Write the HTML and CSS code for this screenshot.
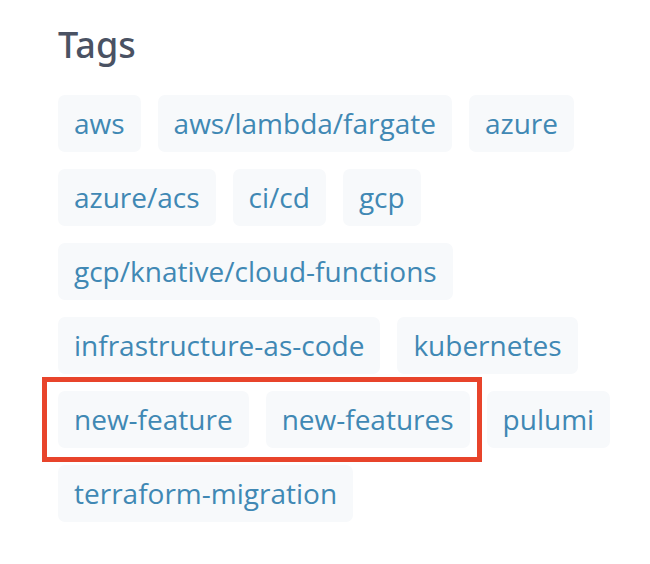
FILE: index.html
```html
<!DOCTYPE html>
<html>
<head>
<meta charset="utf-8">
<link rel="stylesheet" href="styles.css">
</head>
<body>
<section class="tags-panel">
  <h2 class="title">Tags</h2>
  <div class="tag-list">
    <a class="tag">aws</a>
    <a class="tag">aws/lambda/fargate</a>
    <a class="tag">azure</a>
    <a class="tag">azure/acs</a>
    <a class="tag">ci/cd</a>
    <a class="tag">gcp</a>
    <a class="tag">gcp/knative/cloud-functions</a>
    <a class="tag">infrastructure-as-code</a>
    <a class="tag">kubernetes</a>
    <a class="tag">new-feature</a>
    <a class="tag">new-features</a>
    <a class="tag">pulumi</a>
    <a class="tag">terraform-migration</a>
  </div>
  <div class="highlight"></div>
</section>
</body>
</html>
```
FILE: styles.css
```css
html, body {
  margin: 0;
  padding: 0;
  background: #ffffff;
}
.tags-panel {
  position: relative;
  width: 650px;
  height: 564px;
  box-sizing: border-box;
  padding: 20px 20px 0 58px;
}
.title {
  margin: 0;
  font-family: "Noto Sans", "Open Sans", sans-serif;
  font-weight: 500;
  font-size: 36px;
  line-height: 50px;
  color: #4a5263;
}
.tag-list {
  display: flex;
  flex-wrap: wrap;
  column-gap: 17px;
  row-gap: 17px;
  margin-top: 25px;
}
.tag {
  display: block;
  height: 57px;
  box-sizing: border-box;
  padding: 0 16px;
  line-height: 57px;
  font-family: "Open Sans", "Noto Sans", sans-serif;
  font-size: 28px;
  color: #4088b4;
  background: #f7f9fb;
  border-radius: 7px;
  white-space: nowrap;
}
.highlight {
  position: absolute;
  left: 42px;
  top: 377px;
  width: 440px;
  height: 85px;
  box-sizing: border-box;
  border: 5px solid #e8442b;
}
```
